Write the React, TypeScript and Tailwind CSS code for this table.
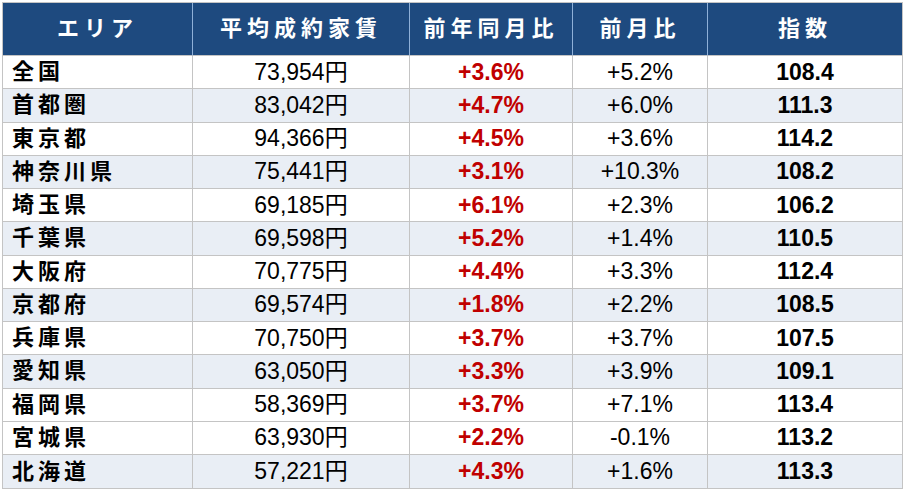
import React from 'react';

type Row = {
  area: string;
  rent: string;
  yoy: string;
  mom: string;
  index: string;
  shade: boolean;
};

const rows: Row[] = [
  { area: '全国', rent: '73,954円', yoy: '+3.6%', mom: '+5.2%', index: '108.4', shade: false },
  { area: '首都圏', rent: '83,042円', yoy: '+4.7%', mom: '+6.0%', index: '111.3', shade: true },
  { area: '東京都', rent: '94,366円', yoy: '+4.5%', mom: '+3.6%', index: '114.2', shade: false },
  { area: '神奈川県', rent: '75,441円', yoy: '+3.1%', mom: '+10.3%', index: '108.2', shade: true },
  { area: '埼玉県', rent: '69,185円', yoy: '+6.1%', mom: '+2.3%', index: '106.2', shade: false },
  { area: '千葉県', rent: '69,598円', yoy: '+5.2%', mom: '+1.4%', index: '110.5', shade: true },
  { area: '大阪府', rent: '70,775円', yoy: '+4.4%', mom: '+3.3%', index: '112.4', shade: false },
  { area: '京都府', rent: '69,574円', yoy: '+1.8%', mom: '+2.2%', index: '108.5', shade: true },
  { area: '兵庫県', rent: '70,750円', yoy: '+3.7%', mom: '+3.7%', index: '107.5', shade: false },
  { area: '愛知県', rent: '63,050円', yoy: '+3.3%', mom: '+3.9%', index: '109.1', shade: true },
  { area: '福岡県', rent: '58,369円', yoy: '+3.7%', mom: '+7.1%', index: '113.4', shade: false },
  { area: '宮城県', rent: '63,930円', yoy: '+2.2%', mom: '-0.1%', index: '113.2', shade: false },
  { area: '北海道', rent: '57,221円', yoy: '+4.3%', mom: '+1.6%', index: '113.3', shade: true },
];

const headers = ['エリア', '平均成約家賃', '前年同月比', '前月比', '指数'];

const font = "font-['Liberation_Sans','Noto_Sans_CJK_JP',sans-serif]";

export default function App() {
  return (
    <div className={`w-[906px] h-[491px] bg-white p-[2px] overflow-hidden leading-none ${font}`}>
      <div className="grid grid-cols-[190px_217px_163px_135px_194px] grid-rows-[53px_repeat(13,33.25px)] border border-[#c4c4c4] w-fit">
        {headers.map((h, i) => (
          <div
            key={h}
            className={`bg-[#1e4a7f] text-white font-bold text-[22px] tracking-[5px] flex items-center justify-center border-b border-[#c4c4c4] ${
              i < 4 ? 'border-r border-r-[#8fb0d8]' : ''
            }`}
          >
            {h}
          </div>
        ))}
        {rows.map((r, i) => {
          const bg = r.shade ? 'bg-[#e9eef5]' : 'bg-white';
          const cell = `${bg} flex items-center overflow-hidden border-[#c4c4c4] ${i < rows.length - 1 ? 'border-b' : ''}`;
          return (
            <React.Fragment key={r.area}>
              <div className={`${cell} border-r pl-[9px] font-bold text-[22px] tracking-[4px] text-black`}>
                {r.area}
              </div>
              <div className={`${cell} border-r justify-center text-[23px] text-black`}>
                {r.rent}
              </div>
              <div className={`${cell} border-r justify-center text-[23px] font-bold text-[#c00000]`}>
                {r.yoy}
              </div>
              <div className={`${cell} border-r justify-center text-[23px] text-black`}>
                {r.mom}
              </div>
              <div className={`${cell} justify-center text-[23px] font-bold text-black`}>
                {r.index}
              </div>
            </React.Fragment>
          );
        })}
      </div>
    </div>
  );
}
